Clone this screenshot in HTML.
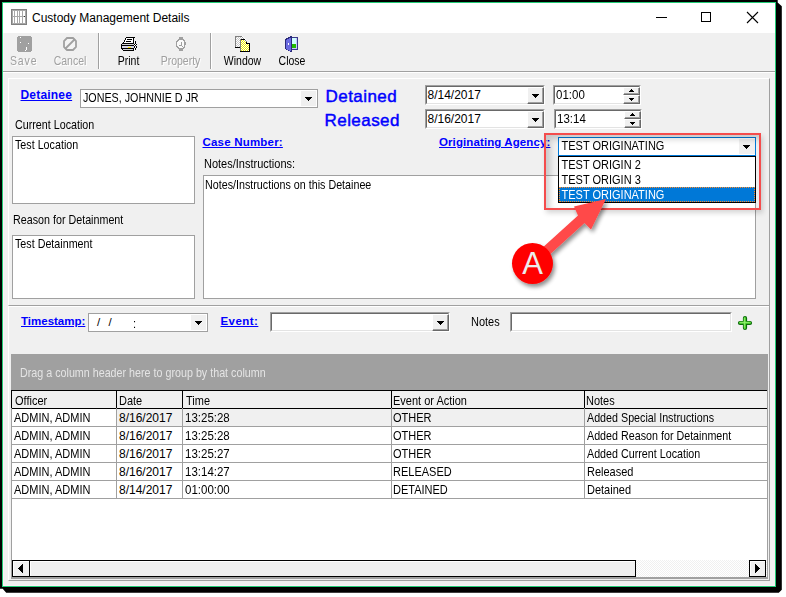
<!DOCTYPE html>
<html><head><meta charset="utf-8">
<style>
*{box-sizing:border-box;margin:0;padding:0}
html,body{width:786px;height:597px;overflow:hidden;background:#fff}
body{position:relative;font-family:"Liberation Sans",sans-serif;font-size:11px;color:#000}
.a{position:absolute}
.t{position:absolute;white-space:pre;line-height:1}
.lnk{color:#0000ff;font-weight:700;text-decoration:underline}
.box{position:absolute;background:#fff;border:1px solid #a0a0a0}
.sunk{position:absolute;background:#fff;border-top:1px solid #a0a0a0;border-left:1px solid #a0a0a0;border-right:1px solid #fff;border-bottom:1px solid #fff}
.sunk>i{position:absolute;left:0;top:0;right:0;bottom:0;border-top:1px solid #696969;border-left:1px solid #696969;border-right:1px solid #e3e3e3;border-bottom:1px solid #e3e3e3}
.btn3d{position:absolute;background:#f0f0f0;border-top:1px solid #fff;border-left:1px solid #fff;border-right:1px solid #696969;border-bottom:1px solid #696969;box-shadow:inset -1px -1px 0 #a0a0a0}
.dn{position:absolute;width:0;height:0;border-left:3.5px solid transparent;border-right:3.5px solid transparent;border-top:4px solid #000}
.up{position:absolute;width:0;height:0;border-left:3px solid transparent;border-right:3px solid transparent;border-bottom:3px solid #000}
.dis{color:#a0a0a0;text-shadow:1px 1px 0 #fff}
</style></head><body>
<!-- shadow -->
<svg class="a" style="left:0;top:0" width="786" height="597">
<polygon fill="#000" points="0,0 777.7,0 777.7,2.5 781.8,6.2 781.8,589.8 778.8,592.8 6.2,592.8 2.7,588.7 0,588.7"/>
</svg>
<!-- window -->
<div class="a" style="left:2px;top:2px;width:774px;height:585px;border:1px solid #22cc77;background:#f0f0f0"></div>
<div class="a" style="left:3px;top:3px;width:772px;height:30px;background:#fff"></div>
<div class="a" style="left:3px;top:33px;width:1px;height:553px;background:#fcf0f6"></div>
<div class="a" style="left:3px;top:585px;width:772px;height:1px;background:#fcf0f6"></div>


<!-- title -->
<svg class="a" style="left:11px;top:9px" width="16" height="16" shape-rendering="crispEdges"><rect x="0" y="0" width="1" height="1" fill="#808080"/><rect x="1" y="0" width="1" height="1" fill="#808080"/><rect x="2" y="0" width="1" height="1" fill="#808080"/><rect x="3" y="0" width="1" height="1" fill="#808080"/><rect x="4" y="0" width="1" height="1" fill="#808080"/><rect x="5" y="0" width="1" height="1" fill="#808080"/><rect x="6" y="0" width="1" height="1" fill="#808080"/><rect x="7" y="0" width="1" height="1" fill="#808080"/><rect x="8" y="0" width="1" height="1" fill="#808080"/><rect x="9" y="0" width="1" height="1" fill="#808080"/><rect x="10" y="0" width="1" height="1" fill="#808080"/><rect x="11" y="0" width="1" height="1" fill="#808080"/><rect x="12" y="0" width="1" height="1" fill="#808080"/><rect x="13" y="0" width="1" height="1" fill="#808080"/><rect x="14" y="0" width="1" height="1" fill="#808080"/><rect x="15" y="0" width="1" height="1" fill="#808080"/><rect x="0" y="1" width="1" height="1" fill="#808080"/><rect x="1" y="1" width="1" height="1" fill="#a8a8a8"/><rect x="2" y="1" width="1" height="1" fill="#a8a8a8"/><rect x="3" y="1" width="1" height="1" fill="#a8a8a8"/><rect x="4" y="1" width="1" height="1" fill="#a8a8a8"/><rect x="5" y="1" width="1" height="1" fill="#a8a8a8"/><rect x="6" y="1" width="1" height="1" fill="#a8a8a8"/><rect x="7" y="1" width="1" height="1" fill="#a8a8a8"/><rect x="8" y="1" width="1" height="1" fill="#a8a8a8"/><rect x="9" y="1" width="1" height="1" fill="#a8a8a8"/><rect x="10" y="1" width="1" height="1" fill="#a8a8a8"/><rect x="11" y="1" width="1" height="1" fill="#a8a8a8"/><rect x="12" y="1" width="1" height="1" fill="#a8a8a8"/><rect x="13" y="1" width="1" height="1" fill="#a8a8a8"/><rect x="14" y="1" width="1" height="1" fill="#a8a8a8"/><rect x="15" y="1" width="1" height="1" fill="#808080"/><rect x="0" y="2" width="1" height="1" fill="#808080"/><rect x="1" y="2" width="1" height="1" fill="#a8a8a8"/><rect x="2" y="2" width="1" height="1" fill="#fff"/><rect x="3" y="2" width="1" height="1" fill="#a8a8a8"/><rect x="4" y="2" width="1" height="1" fill="#fff"/><rect x="5" y="2" width="1" height="1" fill="#fff"/><rect x="6" y="2" width="1" height="1" fill="#a8a8a8"/><rect x="7" y="2" width="1" height="1" fill="#fff"/><rect x="8" y="2" width="1" height="1" fill="#a8a8a8"/><rect x="9" y="2" width="1" height="1" fill="#fff"/><rect x="10" y="2" width="1" height="1" fill="#fff"/><rect x="11" y="2" width="1" height="1" fill="#a8a8a8"/><rect x="12" y="2" width="1" height="1" fill="#fff"/><rect x="13" y="2" width="1" height="1" fill="#fff"/><rect x="14" y="2" width="1" height="1" fill="#a8a8a8"/><rect x="15" y="2" width="1" height="1" fill="#808080"/><rect x="0" y="3" width="1" height="1" fill="#808080"/><rect x="1" y="3" width="1" height="1" fill="#a8a8a8"/><rect x="2" y="3" width="1" height="1" fill="#fff"/><rect x="3" y="3" width="1" height="1" fill="#a8a8a8"/><rect x="4" y="3" width="1" height="1" fill="#fff"/><rect x="5" y="3" width="1" height="1" fill="#fff"/><rect x="6" y="3" width="1" height="1" fill="#a8a8a8"/><rect x="7" y="3" width="1" height="1" fill="#fff"/><rect x="8" y="3" width="1" height="1" fill="#a8a8a8"/><rect x="9" y="3" width="1" height="1" fill="#fff"/><rect x="10" y="3" width="1" height="1" fill="#fff"/><rect x="11" y="3" width="1" height="1" fill="#a8a8a8"/><rect x="12" y="3" width="1" height="1" fill="#fff"/><rect x="13" y="3" width="1" height="1" fill="#fff"/><rect x="14" y="3" width="1" height="1" fill="#a8a8a8"/><rect x="15" y="3" width="1" height="1" fill="#808080"/><rect x="0" y="4" width="1" height="1" fill="#808080"/><rect x="1" y="4" width="1" height="1" fill="#a8a8a8"/><rect x="2" y="4" width="1" height="1" fill="#fff"/><rect x="3" y="4" width="1" height="1" fill="#a8a8a8"/><rect x="4" y="4" width="1" height="1" fill="#fff"/><rect x="5" y="4" width="1" height="1" fill="#fff"/><rect x="6" y="4" width="1" height="1" fill="#a8a8a8"/><rect x="7" y="4" width="1" height="1" fill="#fff"/><rect x="8" y="4" width="1" height="1" fill="#a8a8a8"/><rect x="9" y="4" width="1" height="1" fill="#fff"/><rect x="10" y="4" width="1" height="1" fill="#fff"/><rect x="11" y="4" width="1" height="1" fill="#a8a8a8"/><rect x="12" y="4" width="1" height="1" fill="#fff"/><rect x="13" y="4" width="1" height="1" fill="#fff"/><rect x="14" y="4" width="1" height="1" fill="#a8a8a8"/><rect x="15" y="4" width="1" height="1" fill="#808080"/><rect x="0" y="5" width="1" height="1" fill="#808080"/><rect x="1" y="5" width="1" height="1" fill="#a8a8a8"/><rect x="2" y="5" width="1" height="1" fill="#fff"/><rect x="3" y="5" width="1" height="1" fill="#a8a8a8"/><rect x="4" y="5" width="1" height="1" fill="#fff"/><rect x="5" y="5" width="1" height="1" fill="#fff"/><rect x="6" y="5" width="1" height="1" fill="#a8a8a8"/><rect x="7" y="5" width="1" height="1" fill="#fff"/><rect x="8" y="5" width="1" height="1" fill="#a8a8a8"/><rect x="9" y="5" width="1" height="1" fill="#fff"/><rect x="10" y="5" width="1" height="1" fill="#fff"/><rect x="11" y="5" width="1" height="1" fill="#a8a8a8"/><rect x="12" y="5" width="1" height="1" fill="#fff"/><rect x="13" y="5" width="1" height="1" fill="#fff"/><rect x="14" y="5" width="1" height="1" fill="#a8a8a8"/><rect x="15" y="5" width="1" height="1" fill="#808080"/><rect x="0" y="6" width="1" height="1" fill="#808080"/><rect x="1" y="6" width="1" height="1" fill="#a8a8a8"/><rect x="2" y="6" width="1" height="1" fill="#fff"/><rect x="3" y="6" width="1" height="1" fill="#a8a8a8"/><rect x="4" y="6" width="1" height="1" fill="#fff"/><rect x="5" y="6" width="1" height="1" fill="#fff"/><rect x="6" y="6" width="1" height="1" fill="#a8a8a8"/><rect x="7" y="6" width="1" height="1" fill="#fff"/><rect x="8" y="6" width="1" height="1" fill="#a8a8a8"/><rect x="9" y="6" width="1" height="1" fill="#fff"/><rect x="10" y="6" width="1" height="1" fill="#fff"/><rect x="11" y="6" width="1" height="1" fill="#a8a8a8"/><rect x="12" y="6" width="1" height="1" fill="#fff"/><rect x="13" y="6" width="1" height="1" fill="#fff"/><rect x="14" y="6" width="1" height="1" fill="#a8a8a8"/><rect x="15" y="6" width="1" height="1" fill="#808080"/><rect x="0" y="7" width="1" height="1" fill="#808080"/><rect x="1" y="7" width="1" height="1" fill="#a8a8a8"/><rect x="2" y="7" width="1" height="1" fill="#a8a8a8"/><rect x="3" y="7" width="1" height="1" fill="#a8a8a8"/><rect x="4" y="7" width="1" height="1" fill="#a8a8a8"/><rect x="5" y="7" width="1" height="1" fill="#a8a8a8"/><rect x="6" y="7" width="1" height="1" fill="#a8a8a8"/><rect x="7" y="7" width="1" height="1" fill="#a8a8a8"/><rect x="8" y="7" width="1" height="1" fill="#a8a8a8"/><rect x="9" y="7" width="1" height="1" fill="#a8a8a8"/><rect x="10" y="7" width="1" height="1" fill="#a8a8a8"/><rect x="11" y="7" width="1" height="1" fill="#a8a8a8"/><rect x="12" y="7" width="1" height="1" fill="#a8a8a8"/><rect x="13" y="7" width="1" height="1" fill="#303030"/><rect x="14" y="7" width="1" height="1" fill="#a8a8a8"/><rect x="15" y="7" width="1" height="1" fill="#808080"/><rect x="0" y="8" width="1" height="1" fill="#808080"/><rect x="1" y="8" width="1" height="1" fill="#a8a8a8"/><rect x="2" y="8" width="1" height="1" fill="#fff"/><rect x="3" y="8" width="1" height="1" fill="#a8a8a8"/><rect x="4" y="8" width="1" height="1" fill="#fff"/><rect x="5" y="8" width="1" height="1" fill="#fff"/><rect x="6" y="8" width="1" height="1" fill="#a8a8a8"/><rect x="7" y="8" width="1" height="1" fill="#fff"/><rect x="8" y="8" width="1" height="1" fill="#a8a8a8"/><rect x="9" y="8" width="1" height="1" fill="#fff"/><rect x="10" y="8" width="1" height="1" fill="#fff"/><rect x="11" y="8" width="1" height="1" fill="#a8a8a8"/><rect x="12" y="8" width="1" height="1" fill="#fff"/><rect x="13" y="8" width="1" height="1" fill="#fff"/><rect x="14" y="8" width="1" height="1" fill="#a8a8a8"/><rect x="15" y="8" width="1" height="1" fill="#808080"/><rect x="0" y="9" width="1" height="1" fill="#808080"/><rect x="1" y="9" width="1" height="1" fill="#a8a8a8"/><rect x="2" y="9" width="1" height="1" fill="#fff"/><rect x="3" y="9" width="1" height="1" fill="#a8a8a8"/><rect x="4" y="9" width="1" height="1" fill="#fff"/><rect x="5" y="9" width="1" height="1" fill="#fff"/><rect x="6" y="9" width="1" height="1" fill="#a8a8a8"/><rect x="7" y="9" width="1" height="1" fill="#fff"/><rect x="8" y="9" width="1" height="1" fill="#a8a8a8"/><rect x="9" y="9" width="1" height="1" fill="#fff"/><rect x="10" y="9" width="1" height="1" fill="#fff"/><rect x="11" y="9" width="1" height="1" fill="#a8a8a8"/><rect x="12" y="9" width="1" height="1" fill="#fff"/><rect x="13" y="9" width="1" height="1" fill="#fff"/><rect x="14" y="9" width="1" height="1" fill="#a8a8a8"/><rect x="15" y="9" width="1" height="1" fill="#808080"/><rect x="0" y="10" width="1" height="1" fill="#808080"/><rect x="1" y="10" width="1" height="1" fill="#a8a8a8"/><rect x="2" y="10" width="1" height="1" fill="#fff"/><rect x="3" y="10" width="1" height="1" fill="#a8a8a8"/><rect x="4" y="10" width="1" height="1" fill="#fff"/><rect x="5" y="10" width="1" height="1" fill="#fff"/><rect x="6" y="10" width="1" height="1" fill="#a8a8a8"/><rect x="7" y="10" width="1" height="1" fill="#fff"/><rect x="8" y="10" width="1" height="1" fill="#a8a8a8"/><rect x="9" y="10" width="1" height="1" fill="#fff"/><rect x="10" y="10" width="1" height="1" fill="#fff"/><rect x="11" y="10" width="1" height="1" fill="#a8a8a8"/><rect x="12" y="10" width="1" height="1" fill="#fff"/><rect x="13" y="10" width="1" height="1" fill="#fff"/><rect x="14" y="10" width="1" height="1" fill="#a8a8a8"/><rect x="15" y="10" width="1" height="1" fill="#808080"/><rect x="0" y="11" width="1" height="1" fill="#808080"/><rect x="1" y="11" width="1" height="1" fill="#a8a8a8"/><rect x="2" y="11" width="1" height="1" fill="#fff"/><rect x="3" y="11" width="1" height="1" fill="#a8a8a8"/><rect x="4" y="11" width="1" height="1" fill="#fff"/><rect x="5" y="11" width="1" height="1" fill="#fff"/><rect x="6" y="11" width="1" height="1" fill="#a8a8a8"/><rect x="7" y="11" width="1" height="1" fill="#fff"/><rect x="8" y="11" width="1" height="1" fill="#a8a8a8"/><rect x="9" y="11" width="1" height="1" fill="#fff"/><rect x="10" y="11" width="1" height="1" fill="#fff"/><rect x="11" y="11" width="1" height="1" fill="#a8a8a8"/><rect x="12" y="11" width="1" height="1" fill="#fff"/><rect x="13" y="11" width="1" height="1" fill="#fff"/><rect x="14" y="11" width="1" height="1" fill="#a8a8a8"/><rect x="15" y="11" width="1" height="1" fill="#808080"/><rect x="0" y="12" width="1" height="1" fill="#808080"/><rect x="1" y="12" width="1" height="1" fill="#a8a8a8"/><rect x="2" y="12" width="1" height="1" fill="#fff"/><rect x="3" y="12" width="1" height="1" fill="#a8a8a8"/><rect x="4" y="12" width="1" height="1" fill="#fff"/><rect x="5" y="12" width="1" height="1" fill="#fff"/><rect x="6" y="12" width="1" height="1" fill="#a8a8a8"/><rect x="7" y="12" width="1" height="1" fill="#fff"/><rect x="8" y="12" width="1" height="1" fill="#a8a8a8"/><rect x="9" y="12" width="1" height="1" fill="#fff"/><rect x="10" y="12" width="1" height="1" fill="#fff"/><rect x="11" y="12" width="1" height="1" fill="#a8a8a8"/><rect x="12" y="12" width="1" height="1" fill="#fff"/><rect x="13" y="12" width="1" height="1" fill="#fff"/><rect x="14" y="12" width="1" height="1" fill="#a8a8a8"/><rect x="15" y="12" width="1" height="1" fill="#808080"/><rect x="0" y="13" width="1" height="1" fill="#808080"/><rect x="1" y="13" width="1" height="1" fill="#a8a8a8"/><rect x="2" y="13" width="1" height="1" fill="#fff"/><rect x="3" y="13" width="1" height="1" fill="#a8a8a8"/><rect x="4" y="13" width="1" height="1" fill="#fff"/><rect x="5" y="13" width="1" height="1" fill="#fff"/><rect x="6" y="13" width="1" height="1" fill="#a8a8a8"/><rect x="7" y="13" width="1" height="1" fill="#fff"/><rect x="8" y="13" width="1" height="1" fill="#a8a8a8"/><rect x="9" y="13" width="1" height="1" fill="#fff"/><rect x="10" y="13" width="1" height="1" fill="#fff"/><rect x="11" y="13" width="1" height="1" fill="#a8a8a8"/><rect x="12" y="13" width="1" height="1" fill="#fff"/><rect x="13" y="13" width="1" height="1" fill="#fff"/><rect x="14" y="13" width="1" height="1" fill="#a8a8a8"/><rect x="15" y="13" width="1" height="1" fill="#808080"/><rect x="0" y="14" width="1" height="1" fill="#808080"/><rect x="1" y="14" width="1" height="1" fill="#a8a8a8"/><rect x="2" y="14" width="1" height="1" fill="#a8a8a8"/><rect x="3" y="14" width="1" height="1" fill="#a8a8a8"/><rect x="4" y="14" width="1" height="1" fill="#a8a8a8"/><rect x="5" y="14" width="1" height="1" fill="#a8a8a8"/><rect x="6" y="14" width="1" height="1" fill="#a8a8a8"/><rect x="7" y="14" width="1" height="1" fill="#a8a8a8"/><rect x="8" y="14" width="1" height="1" fill="#a8a8a8"/><rect x="9" y="14" width="1" height="1" fill="#a8a8a8"/><rect x="10" y="14" width="1" height="1" fill="#a8a8a8"/><rect x="11" y="14" width="1" height="1" fill="#a8a8a8"/><rect x="12" y="14" width="1" height="1" fill="#a8a8a8"/><rect x="13" y="14" width="1" height="1" fill="#a8a8a8"/><rect x="14" y="14" width="1" height="1" fill="#a8a8a8"/><rect x="15" y="14" width="1" height="1" fill="#808080"/><rect x="0" y="15" width="1" height="1" fill="#808080"/><rect x="1" y="15" width="1" height="1" fill="#808080"/><rect x="2" y="15" width="1" height="1" fill="#808080"/><rect x="3" y="15" width="1" height="1" fill="#808080"/><rect x="4" y="15" width="1" height="1" fill="#808080"/><rect x="5" y="15" width="1" height="1" fill="#808080"/><rect x="6" y="15" width="1" height="1" fill="#808080"/><rect x="7" y="15" width="1" height="1" fill="#808080"/><rect x="8" y="15" width="1" height="1" fill="#808080"/><rect x="9" y="15" width="1" height="1" fill="#808080"/><rect x="10" y="15" width="1" height="1" fill="#808080"/><rect x="11" y="15" width="1" height="1" fill="#808080"/><rect x="12" y="15" width="1" height="1" fill="#808080"/><rect x="13" y="15" width="1" height="1" fill="#808080"/><rect x="14" y="15" width="1" height="1" fill="#808080"/><rect x="15" y="15" width="1" height="1" fill="#808080"/></svg>
<div class="t" style="left:32px;top:11.5px;font-size:12px;color:#000">Custody Management Details</div>
<div class="a" style="left:656px;top:17px;width:11px;height:1px;background:#000"></div>
<div class="a" style="left:701px;top:12px;width:10px;height:10px;border:1px solid #000"></div>
<svg class="a" style="left:746px;top:11px" width="13" height="13"><path d="M1 1L12 12M12 1L1 12" stroke="#000" stroke-width="1.1"/></svg>

<!-- toolbar -->
<div class="a" style="left:3px;top:71px;width:772px;height:1px;background:#a0a0a0"></div>
<div class="a" style="left:3px;top:72px;width:772px;height:1px;background:#fff"></div>
<div class="a" style="left:98px;top:33px;width:1px;height:36px;background:#a0a0a0"></div><div class="a" style="left:99px;top:33px;width:1px;height:36px;background:#fff"></div>
<div class="a" style="left:210px;top:33px;width:1px;height:36px;background:#a0a0a0"></div><div class="a" style="left:211px;top:33px;width:1px;height:36px;background:#fff"></div>

<svg class="a" style="left:17px;top:36px" width="16" height="16" shape-rendering="crispEdges">
<path d="M1 0H14V1H15V15H14V16H1V15H0V1H1Z" fill="#a0a0a0"/>
<rect x="3" y="1" width="1" height="1" fill="#fff"/>
<rect x="3" y="6" width="1" height="1" fill="#fff"/>
<rect x="11" y="7" width="1" height="1" fill="#fff"/>
<rect x="9" y="11" width="1" height="3" fill="#fff"/>
<rect x="8" y="14" width="1" height="1" fill="#fff"/>
</svg>
<div class="t dis" style="left:0;width:47.5px;text-align:center;top:54px;font-size:10.5px;letter-spacing:0.9px;transform:scaleY(1.17);transform-origin:50% 0">Save</div>

<svg class="a" style="left:62px;top:36px" width="16" height="16">
<polygon points="5,2 11,2 14,5 14,11 11,14 5,14 2,11 2,5" fill="#f4f4f4" stroke="#a0a0a0" stroke-width="1.8"/>
<path d="M13 3L3 13" stroke="#a0a0a0" stroke-width="1.8"/>
</svg>
<div class="t dis" style="left:40px;width:60px;text-align:center;top:54px;font-size:10.5px;transform:scaleY(1.17);transform-origin:50% 0">Cancel</div>

<svg class="a" style="left:120px;top:36px" width="17" height="16" shape-rendering="crispEdges"><rect x="6" y="1" width="1" height="1" fill="#000"/><rect x="7" y="1" width="1" height="1" fill="#000"/><rect x="8" y="1" width="1" height="1" fill="#000"/><rect x="9" y="1" width="1" height="1" fill="#000"/><rect x="10" y="1" width="1" height="1" fill="#000"/><rect x="11" y="1" width="1" height="1" fill="#000"/><rect x="12" y="1" width="1" height="1" fill="#000"/><rect x="13" y="1" width="1" height="1" fill="#000"/><rect x="14" y="1" width="1" height="1" fill="#000"/><rect x="5" y="2" width="1" height="1" fill="#000"/><rect x="6" y="2" width="1" height="1" fill="#fff"/><rect x="7" y="2" width="1" height="1" fill="#fff"/><rect x="8" y="2" width="1" height="1" fill="#fff"/><rect x="9" y="2" width="1" height="1" fill="#fff"/><rect x="10" y="2" width="1" height="1" fill="#fff"/><rect x="11" y="2" width="1" height="1" fill="#fff"/><rect x="12" y="2" width="1" height="1" fill="#fff"/><rect x="13" y="2" width="1" height="1" fill="#000"/><rect x="5" y="3" width="1" height="1" fill="#000"/><rect x="6" y="3" width="1" height="1" fill="#fff"/><rect x="7" y="3" width="1" height="1" fill="#000"/><rect x="8" y="3" width="1" height="1" fill="#000"/><rect x="9" y="3" width="1" height="1" fill="#000"/><rect x="10" y="3" width="1" height="1" fill="#000"/><rect x="11" y="3" width="1" height="1" fill="#000"/><rect x="12" y="3" width="1" height="1" fill="#fff"/><rect x="13" y="3" width="1" height="1" fill="#000"/><rect x="4" y="4" width="1" height="1" fill="#000"/><rect x="5" y="4" width="1" height="1" fill="#fff"/><rect x="6" y="4" width="1" height="1" fill="#fff"/><rect x="7" y="4" width="1" height="1" fill="#fff"/><rect x="8" y="4" width="1" height="1" fill="#fff"/><rect x="9" y="4" width="1" height="1" fill="#fff"/><rect x="10" y="4" width="1" height="1" fill="#fff"/><rect x="11" y="4" width="1" height="1" fill="#fff"/><rect x="12" y="4" width="1" height="1" fill="#fff"/><rect x="13" y="4" width="1" height="1" fill="#000"/><rect x="4" y="5" width="1" height="1" fill="#000"/><rect x="5" y="5" width="1" height="1" fill="#fff"/><rect x="6" y="5" width="1" height="1" fill="#000"/><rect x="7" y="5" width="1" height="1" fill="#000"/><rect x="8" y="5" width="1" height="1" fill="#000"/><rect x="9" y="5" width="1" height="1" fill="#000"/><rect x="10" y="5" width="1" height="1" fill="#000"/><rect x="11" y="5" width="1" height="1" fill="#fff"/><rect x="12" y="5" width="1" height="1" fill="#fff"/><rect x="13" y="5" width="1" height="1" fill="#000"/><rect x="14" y="5" width="1" height="1" fill="#fff"/><rect x="15" y="5" width="1" height="1" fill="#000"/><rect x="3" y="6" width="1" height="1" fill="#000"/><rect x="4" y="6" width="1" height="1" fill="#fff"/><rect x="5" y="6" width="1" height="1" fill="#fff"/><rect x="6" y="6" width="1" height="1" fill="#fff"/><rect x="7" y="6" width="1" height="1" fill="#fff"/><rect x="8" y="6" width="1" height="1" fill="#fff"/><rect x="9" y="6" width="1" height="1" fill="#fff"/><rect x="10" y="6" width="1" height="1" fill="#fff"/><rect x="11" y="6" width="1" height="1" fill="#fff"/><rect x="12" y="6" width="1" height="1" fill="#fff"/><rect x="13" y="6" width="1" height="1" fill="#000"/><rect x="14" y="6" width="1" height="1" fill="#fff"/><rect x="15" y="6" width="1" height="1" fill="#000"/><rect x="2" y="7" width="1" height="1" fill="#000"/><rect x="3" y="7" width="1" height="1" fill="#000"/><rect x="4" y="7" width="1" height="1" fill="#000"/><rect x="5" y="7" width="1" height="1" fill="#000"/><rect x="6" y="7" width="1" height="1" fill="#000"/><rect x="7" y="7" width="1" height="1" fill="#000"/><rect x="8" y="7" width="1" height="1" fill="#000"/><rect x="9" y="7" width="1" height="1" fill="#000"/><rect x="10" y="7" width="1" height="1" fill="#000"/><rect x="11" y="7" width="1" height="1" fill="#000"/><rect x="12" y="7" width="1" height="1" fill="#000"/><rect x="13" y="7" width="1" height="1" fill="#000"/><rect x="15" y="7" width="1" height="1" fill="#000"/><rect x="1" y="8" width="1" height="1" fill="#000"/><rect x="2" y="8" width="1" height="1" fill="#d4d4d4"/><rect x="3" y="8" width="1" height="1" fill="#d4d4d4"/><rect x="4" y="8" width="1" height="1" fill="#d4d4d4"/><rect x="5" y="8" width="1" height="1" fill="#d4d4d4"/><rect x="6" y="8" width="1" height="1" fill="#d4d4d4"/><rect x="7" y="8" width="1" height="1" fill="#d4d4d4"/><rect x="8" y="8" width="1" height="1" fill="#d4d4d4"/><rect x="9" y="8" width="1" height="1" fill="#d4d4d4"/><rect x="10" y="8" width="1" height="1" fill="#d4d4d4"/><rect x="11" y="8" width="1" height="1" fill="#d4d4d4"/><rect x="12" y="8" width="1" height="1" fill="#d4d4d4"/><rect x="13" y="8" width="1" height="1" fill="#d4d4d4"/><rect x="14" y="8" width="1" height="1" fill="#000"/><rect x="15" y="8" width="1" height="1" fill="#fff"/><rect x="16" y="8" width="1" height="1" fill="#000"/><rect x="1" y="9" width="1" height="1" fill="#000"/><rect x="2" y="9" width="1" height="1" fill="#000"/><rect x="3" y="9" width="1" height="1" fill="#000"/><rect x="4" y="9" width="1" height="1" fill="#000"/><rect x="5" y="9" width="1" height="1" fill="#000"/><rect x="6" y="9" width="1" height="1" fill="#000"/><rect x="7" y="9" width="1" height="1" fill="#000"/><rect x="8" y="9" width="1" height="1" fill="#000"/><rect x="9" y="9" width="1" height="1" fill="#000"/><rect x="10" y="9" width="1" height="1" fill="#000"/><rect x="11" y="9" width="1" height="1" fill="#000"/><rect x="12" y="9" width="1" height="1" fill="#000"/><rect x="13" y="9" width="1" height="1" fill="#000"/><rect x="14" y="9" width="1" height="1" fill="#fff"/><rect x="15" y="9" width="1" height="1" fill="#000"/><rect x="1" y="10" width="1" height="1" fill="#000"/><rect x="2" y="10" width="1" height="1" fill="#d8d8e8"/><rect x="3" y="10" width="1" height="1" fill="#d8d8e8"/><rect x="4" y="10" width="1" height="1" fill="#d8d8e8"/><rect x="5" y="10" width="1" height="1" fill="#d8d8e8"/><rect x="6" y="10" width="1" height="1" fill="#d8d8e8"/><rect x="7" y="10" width="1" height="1" fill="#d8d8e8"/><rect x="8" y="10" width="1" height="1" fill="#d8d8e8"/><rect x="9" y="10" width="1" height="1" fill="#d8d8e8"/><rect x="10" y="10" width="1" height="1" fill="#d8d8e8"/><rect x="11" y="10" width="1" height="1" fill="#d8d8e8"/><rect x="12" y="10" width="1" height="1" fill="#d8d8e8"/><rect x="13" y="10" width="1" height="1" fill="#d8d8e8"/><rect x="14" y="10" width="1" height="1" fill="#000"/><rect x="16" y="10" width="1" height="1" fill="#000"/><rect x="1" y="11" width="1" height="1" fill="#000"/><rect x="2" y="11" width="1" height="1" fill="#d8d8e8"/><rect x="3" y="11" width="1" height="1" fill="#d8d8e8"/><rect x="4" y="11" width="1" height="1" fill="#d8d8e8"/><rect x="5" y="11" width="1" height="1" fill="#d8d8e8"/><rect x="6" y="11" width="1" height="1" fill="#d8d8e8"/><rect x="7" y="11" width="1" height="1" fill="#d8d8e8"/><rect x="8" y="11" width="1" height="1" fill="#ffee00"/><rect x="9" y="11" width="1" height="1" fill="#ffee00"/><rect x="10" y="11" width="1" height="1" fill="#ffee00"/><rect x="11" y="11" width="1" height="1" fill="#d8d8e8"/><rect x="12" y="11" width="1" height="1" fill="#d8d8e8"/><rect x="13" y="11" width="1" height="1" fill="#d8d8e8"/><rect x="14" y="11" width="1" height="1" fill="#000"/><rect x="15" y="11" width="1" height="1" fill="#fff"/><rect x="16" y="11" width="1" height="1" fill="#000"/><rect x="1" y="12" width="1" height="1" fill="#000"/><rect x="2" y="12" width="1" height="1" fill="#000"/><rect x="3" y="12" width="1" height="1" fill="#000"/><rect x="4" y="12" width="1" height="1" fill="#000"/><rect x="5" y="12" width="1" height="1" fill="#000"/><rect x="6" y="12" width="1" height="1" fill="#000"/><rect x="7" y="12" width="1" height="1" fill="#000"/><rect x="8" y="12" width="1" height="1" fill="#000"/><rect x="9" y="12" width="1" height="1" fill="#000"/><rect x="10" y="12" width="1" height="1" fill="#000"/><rect x="11" y="12" width="1" height="1" fill="#000"/><rect x="12" y="12" width="1" height="1" fill="#000"/><rect x="13" y="12" width="1" height="1" fill="#000"/><rect x="15" y="12" width="1" height="1" fill="#000"/><rect x="2" y="13" width="1" height="1" fill="#000"/><rect x="3" y="13" width="1" height="1" fill="#d4d4d4"/><rect x="4" y="13" width="1" height="1" fill="#d4d4d4"/><rect x="5" y="13" width="1" height="1" fill="#d4d4d4"/><rect x="6" y="13" width="1" height="1" fill="#d4d4d4"/><rect x="7" y="13" width="1" height="1" fill="#d4d4d4"/><rect x="8" y="13" width="1" height="1" fill="#d4d4d4"/><rect x="9" y="13" width="1" height="1" fill="#d4d4d4"/><rect x="10" y="13" width="1" height="1" fill="#d4d4d4"/><rect x="11" y="13" width="1" height="1" fill="#d4d4d4"/><rect x="12" y="13" width="1" height="1" fill="#d4d4d4"/><rect x="13" y="13" width="1" height="1" fill="#000"/><rect x="14" y="13" width="1" height="1" fill="#fff"/><rect x="15" y="13" width="1" height="1" fill="#000"/><rect x="3" y="14" width="1" height="1" fill="#000"/><rect x="4" y="14" width="1" height="1" fill="#000"/><rect x="5" y="14" width="1" height="1" fill="#000"/><rect x="6" y="14" width="1" height="1" fill="#000"/><rect x="7" y="14" width="1" height="1" fill="#000"/><rect x="8" y="14" width="1" height="1" fill="#000"/><rect x="9" y="14" width="1" height="1" fill="#000"/><rect x="10" y="14" width="1" height="1" fill="#000"/><rect x="11" y="14" width="1" height="1" fill="#000"/><rect x="12" y="14" width="1" height="1" fill="#000"/><rect x="13" y="14" width="1" height="1" fill="#000"/></svg>
<div class="t" style="left:98.5px;width:60px;text-align:center;top:54px;font-size:10.5px;transform:scaleY(1.17);transform-origin:50% 0">Print</div>

<svg class="a" style="left:175px;top:36px" width="12" height="16" shape-rendering="crispEdges"><rect x="4" y="1" width="1" height="1" fill="#a0a0a0"/><rect x="5" y="1" width="1" height="1" fill="#a0a0a0"/><rect x="6" y="1" width="1" height="1" fill="#a0a0a0"/><rect x="7" y="1" width="1" height="1" fill="#a0a0a0"/><rect x="4" y="2" width="1" height="1" fill="#a0a0a0"/><rect x="5" y="2" width="1" height="1" fill="#a0a0a0"/><rect x="6" y="2" width="1" height="1" fill="#a0a0a0"/><rect x="7" y="2" width="1" height="1" fill="#a0a0a0"/><rect x="3" y="3" width="1" height="1" fill="#a0a0a0"/><rect x="4" y="3" width="1" height="1" fill="#a0a0a0"/><rect x="5" y="3" width="1" height="1" fill="#a0a0a0"/><rect x="6" y="3" width="1" height="1" fill="#a0a0a0"/><rect x="7" y="3" width="1" height="1" fill="#a0a0a0"/><rect x="8" y="3" width="1" height="1" fill="#a0a0a0"/><rect x="2" y="4" width="1" height="1" fill="#a0a0a0"/><rect x="3" y="4" width="1" height="1" fill="#a0a0a0"/><rect x="4" y="4" width="1" height="1" fill="#fafafa"/><rect x="5" y="4" width="1" height="1" fill="#fafafa"/><rect x="6" y="4" width="1" height="1" fill="#fafafa"/><rect x="7" y="4" width="1" height="1" fill="#fafafa"/><rect x="8" y="4" width="1" height="1" fill="#a0a0a0"/><rect x="9" y="4" width="1" height="1" fill="#a0a0a0"/><rect x="1" y="5" width="1" height="1" fill="#a0a0a0"/><rect x="2" y="5" width="1" height="1" fill="#a0a0a0"/><rect x="3" y="5" width="1" height="1" fill="#fafafa"/><rect x="4" y="5" width="1" height="1" fill="#fafafa"/><rect x="5" y="5" width="1" height="1" fill="#fafafa"/><rect x="6" y="5" width="1" height="1" fill="#fafafa"/><rect x="7" y="5" width="1" height="1" fill="#fafafa"/><rect x="8" y="5" width="1" height="1" fill="#fafafa"/><rect x="9" y="5" width="1" height="1" fill="#a0a0a0"/><rect x="1" y="6" width="1" height="1" fill="#a0a0a0"/><rect x="2" y="6" width="1" height="1" fill="#fafafa"/><rect x="3" y="6" width="1" height="1" fill="#fafafa"/><rect x="4" y="6" width="1" height="1" fill="#fafafa"/><rect x="5" y="6" width="1" height="1" fill="#fafafa"/><rect x="6" y="6" width="1" height="1" fill="#a0a0a0"/><rect x="7" y="6" width="1" height="1" fill="#fafafa"/><rect x="8" y="6" width="1" height="1" fill="#fafafa"/><rect x="9" y="6" width="1" height="1" fill="#a0a0a0"/><rect x="10" y="6" width="1" height="1" fill="#a0a0a0"/><rect x="1" y="7" width="1" height="1" fill="#a0a0a0"/><rect x="2" y="7" width="1" height="1" fill="#fafafa"/><rect x="3" y="7" width="1" height="1" fill="#fafafa"/><rect x="4" y="7" width="1" height="1" fill="#fafafa"/><rect x="5" y="7" width="1" height="1" fill="#fafafa"/><rect x="6" y="7" width="1" height="1" fill="#a0a0a0"/><rect x="7" y="7" width="1" height="1" fill="#fafafa"/><rect x="8" y="7" width="1" height="1" fill="#fafafa"/><rect x="9" y="7" width="1" height="1" fill="#a0a0a0"/><rect x="10" y="7" width="1" height="1" fill="#a0a0a0"/><rect x="1" y="8" width="1" height="1" fill="#a0a0a0"/><rect x="2" y="8" width="1" height="1" fill="#fafafa"/><rect x="3" y="8" width="1" height="1" fill="#fafafa"/><rect x="4" y="8" width="1" height="1" fill="#fafafa"/><rect x="5" y="8" width="1" height="1" fill="#fafafa"/><rect x="6" y="8" width="1" height="1" fill="#a0a0a0"/><rect x="7" y="8" width="1" height="1" fill="#fafafa"/><rect x="8" y="8" width="1" height="1" fill="#fafafa"/><rect x="9" y="8" width="1" height="1" fill="#a0a0a0"/><rect x="10" y="8" width="1" height="1" fill="#a0a0a0"/><rect x="1" y="9" width="1" height="1" fill="#a0a0a0"/><rect x="2" y="9" width="1" height="1" fill="#fafafa"/><rect x="3" y="9" width="1" height="1" fill="#fafafa"/><rect x="4" y="9" width="1" height="1" fill="#a0a0a0"/><rect x="5" y="9" width="1" height="1" fill="#a0a0a0"/><rect x="6" y="9" width="1" height="1" fill="#a0a0a0"/><rect x="7" y="9" width="1" height="1" fill="#fafafa"/><rect x="8" y="9" width="1" height="1" fill="#fafafa"/><rect x="9" y="9" width="1" height="1" fill="#a0a0a0"/><rect x="1" y="10" width="1" height="1" fill="#a0a0a0"/><rect x="2" y="10" width="1" height="1" fill="#a0a0a0"/><rect x="3" y="10" width="1" height="1" fill="#fafafa"/><rect x="4" y="10" width="1" height="1" fill="#fafafa"/><rect x="5" y="10" width="1" height="1" fill="#fafafa"/><rect x="6" y="10" width="1" height="1" fill="#fafafa"/><rect x="7" y="10" width="1" height="1" fill="#a0a0a0"/><rect x="8" y="10" width="1" height="1" fill="#fafafa"/><rect x="9" y="10" width="1" height="1" fill="#a0a0a0"/><rect x="2" y="11" width="1" height="1" fill="#a0a0a0"/><rect x="3" y="11" width="1" height="1" fill="#a0a0a0"/><rect x="4" y="11" width="1" height="1" fill="#fafafa"/><rect x="5" y="11" width="1" height="1" fill="#fafafa"/><rect x="6" y="11" width="1" height="1" fill="#fafafa"/><rect x="7" y="11" width="1" height="1" fill="#fafafa"/><rect x="8" y="11" width="1" height="1" fill="#a0a0a0"/><rect x="9" y="11" width="1" height="1" fill="#a0a0a0"/><rect x="3" y="12" width="1" height="1" fill="#a0a0a0"/><rect x="4" y="12" width="1" height="1" fill="#a0a0a0"/><rect x="5" y="12" width="1" height="1" fill="#a0a0a0"/><rect x="6" y="12" width="1" height="1" fill="#a0a0a0"/><rect x="7" y="12" width="1" height="1" fill="#a0a0a0"/><rect x="8" y="12" width="1" height="1" fill="#a0a0a0"/><rect x="4" y="13" width="1" height="1" fill="#a0a0a0"/><rect x="5" y="13" width="1" height="1" fill="#a0a0a0"/><rect x="6" y="13" width="1" height="1" fill="#a0a0a0"/><rect x="7" y="13" width="1" height="1" fill="#a0a0a0"/><rect x="4" y="14" width="1" height="1" fill="#a0a0a0"/><rect x="5" y="14" width="1" height="1" fill="#a0a0a0"/><rect x="6" y="14" width="1" height="1" fill="#a0a0a0"/><rect x="7" y="14" width="1" height="1" fill="#a0a0a0"/></svg>
<div class="t dis" style="left:150.5px;width:60px;text-align:center;top:54px;font-size:10.5px;transform:scaleY(1.17);transform-origin:50% 0">Property</div>

<svg class="a" style="left:235px;top:36px" width="16" height="16" shape-rendering="crispEdges">
<defs>
<pattern id="pg" width="2" height="2" patternUnits="userSpaceOnUse"><rect width="2" height="2" fill="#fff"/><rect width="1" height="1" fill="#c8c8c8"/><rect x="1" y="1" width="1" height="1" fill="#c8c8c8"/></pattern>
<pattern id="py" width="2" height="2" patternUnits="userSpaceOnUse"><rect width="2" height="2" fill="#fff"/><rect width="1" height="1" fill="#f0f000"/><rect x="1" y="1" width="1" height="1" fill="#f0f000"/></pattern>
</defs>
<path d="M0 0H7L11 4V12H0Z" fill="url(#pg)"/>
<rect x="0" y="0" width="7" height="1" fill="#808080"/>
<rect x="0" y="0" width="1" height="12" fill="#808080"/>
<rect x="7" y="1" width="1" height="1" fill="#a0a0a0"/>
<rect x="8" y="2" width="1" height="1" fill="#a0a0a0"/>
<rect x="0" y="11" width="5" height="1" fill="#000"/>
<path d="M5 3H10L14 7V15H5Z" fill="url(#py)"/>
<rect x="5" y="3" width="5" height="1" fill="#000"/>
<rect x="5" y="3" width="1" height="13" fill="#808080"/>
<rect x="10" y="4" width="1" height="1" fill="#808080"/>
<rect x="11" y="5" width="1" height="1" fill="#808080"/>
<rect x="11" y="7" width="4" height="1" fill="#000"/>
<rect x="11" y="6" width="1" height="1" fill="#000"/>
<rect x="14" y="7" width="1" height="9" fill="#000"/>
<rect x="5" y="15" width="10" height="1" fill="#000"/>
<rect x="12" y="4" width="3" height="3" fill="#f0f0f0"/>
</svg>
<div class="t" style="left:212.5px;width:60px;text-align:center;top:54px;font-size:10.5px;transform:scaleY(1.17);transform-origin:50% 0">Window</div>

<svg class="a" style="left:284px;top:36px" width="15" height="16" shape-rendering="crispEdges">
<rect x="7" y="1" width="7" height="13" fill="#3a3a8a"/>
<rect x="8" y="2" width="5" height="11" fill="#c8c8ff"/>
<rect x="8" y="2" width="4" height="6" fill="#d0ffff"/>
<rect x="8" y="8" width="4" height="4" fill="#22bb00"/>
<path d="M1 3H2V2H4V1H6V0H8V16H6V15H4V14H2V13H1Z" fill="#2a2a7a"/>
<path d="M2 4H3V3H5V2H7V15H5V14H3V13H2Z" fill="#6a6ae0"/>
<rect x="4" y="7" width="1" height="2" fill="#fff"/>
</svg>
<div class="t" style="left:262px;width:60px;text-align:center;top:54px;font-size:10.5px;transform:scaleY(1.17);transform-origin:50% 0">Close</div>


<!-- panel 1 -->
<div class="a" style="left:8px;top:78px;width:762px;height:228px;border-top:1px solid #fff;border-left:1px solid #fff;border-bottom:1px solid #a0a0a0;border-right:1px solid #a0a0a0"></div>
<div class="t lnk" style="left:20.5px;top:88.5px;font-size:12px;letter-spacing:0.2px">Detainee</div>
<div class="box" style="left:80px;top:89px;width:238px;height:19px"></div>
<div class="a" style="left:301px;top:91px;width:15px;height:15px;background:#f0f0f0"></div>
<svg class="a" style="left:305px;top:97px" width="7" height="4" shape-rendering="crispEdges"><path d="M0 0h7v1h-1v1h-1v1h-1v1h-1v-1h-1v-1h-1v-1h-1z"/></svg>
<div class="t" style="left:82.5px;top:91.5px;font-size:11px;transform:scale(0.975,1.12);transform-origin:0 0">JONES, JOHNNIE D JR</div>
<div class="t" style="left:325.5px;top:87.5px;font-size:17px;font-weight:400;letter-spacing:0.45px;-webkit-text-stroke:0.45px #0000ff;color:#0000ff">Detained</div>
<div class="t" style="left:324.5px;top:111.5px;font-size:17px;font-weight:400;letter-spacing:0.45px;-webkit-text-stroke:0.45px #0000ff;color:#0000ff">Released</div>

<div class="sunk" style="left:425px;top:85px;width:120px;height:20px"><i></i></div>
<div class="btn3d" style="left:527px;top:87px;width:17px;height:17px"></div>
<svg class="a" style="left:532px;top:94px" width="7" height="4" shape-rendering="crispEdges"><path d="M0 0h7v1h-1v1h-1v1h-1v1h-1v-1h-1v-1h-1v-1h-1z"/></svg>
<div class="t" style="left:427.5px;top:88.5px;font-size:12px">8/14/2017</div>
<div class="sunk" style="left:425px;top:109px;width:120px;height:20px"><i></i></div>
<div class="btn3d" style="left:527px;top:111px;width:17px;height:17px"></div>
<svg class="a" style="left:532px;top:118px" width="7" height="4" shape-rendering="crispEdges"><path d="M0 0h7v1h-1v1h-1v1h-1v1h-1v-1h-1v-1h-1v-1h-1z"/></svg>
<div class="t" style="left:427.5px;top:112.5px;font-size:12px">8/16/2017</div>

<div class="sunk" style="left:553px;top:85px;width:88px;height:20px"><i></i></div>
<div class="btn3d" style="left:623px;top:87px;width:17px;height:8px"></div>
<div class="btn3d" style="left:623px;top:95px;width:17px;height:9px"></div>
<svg class="a" style="left:629px;top:89px" width="5" height="3" shape-rendering="crispEdges"><path d="M0 3h5v-1h-1v-1h-1v-1h-1v1h-1v1h-1z"/></svg>
<svg class="a" style="left:629px;top:98px" width="5" height="3" shape-rendering="crispEdges"><path d="M0 0h5v1h-1v1h-1v1h-1v-1h-1v-1h-1z"/></svg>
<div class="t" style="left:556px;top:88.5px;font-size:11.5px;transform:scaleY(1.1);transform-origin:0 0">01:00</div>
<div class="sunk" style="left:554px;top:109px;width:88px;height:20px"><i></i></div>
<div class="btn3d" style="left:624px;top:111px;width:17px;height:8px"></div>
<div class="btn3d" style="left:624px;top:119px;width:17px;height:9px"></div>
<svg class="a" style="left:630px;top:113px" width="5" height="3" shape-rendering="crispEdges"><path d="M0 3h5v-1h-1v-1h-1v-1h-1v1h-1v1h-1z"/></svg>
<svg class="a" style="left:630px;top:122px" width="5" height="3" shape-rendering="crispEdges"><path d="M0 0h5v1h-1v1h-1v1h-1v-1h-1v-1h-1z"/></svg>
<div class="t" style="left:557px;top:112.5px;font-size:11.5px;transform:scaleY(1.1);transform-origin:0 0">13:14</div>

<div class="t" style="left:14.5px;top:118.5px;font-size:11px;transform:scale(0.975,1.12);transform-origin:0 0">Current Location</div>
<div class="box" style="left:12px;top:136px;width:183px;height:68px"></div>
<div class="t" style="left:14.5px;top:139px;font-size:11px;transform:scale(0.975,1.12);transform-origin:0 0">Test Location</div>
<div class="t" style="left:13px;top:214px;font-size:11px;transform:scale(0.975,1.12);transform-origin:0 0">Reason for Detainment</div>
<div class="box" style="left:12px;top:235px;width:183px;height:64px"></div>
<div class="t" style="left:14.5px;top:238px;font-size:11px;transform:scale(0.975,1.12);transform-origin:0 0">Test Detainment</div>

<div class="t lnk" style="left:202.5px;top:137px;font-size:11.5px;letter-spacing:0.2px">Case Number:</div>
<div class="t" style="left:204px;top:158px;font-size:11px;transform:scaleY(1.12);transform-origin:0 0">Notes/Instructions:</div>
<div class="box" style="left:203px;top:175px;width:553px;height:124px"></div>
<div class="t" style="left:204.5px;top:178.5px;font-size:11px;transform:scale(0.975,1.12);transform-origin:0 0">Notes/Instructions on this Detainee</div>
<div class="t lnk" style="left:439px;top:137px;font-size:11.5px;letter-spacing:0.1px">Originating Agency:</div>


<!-- originating dropdown -->
<div class="a" style="left:558px;top:137px;width:198px;height:19px;background:#fff;border:1px solid #0078d7"></div>
<div class="a" style="left:739px;top:139px;width:16px;height:15px;background:#f0f0f0"></div>
<svg class="a" style="left:743px;top:145px" width="7" height="4" shape-rendering="crispEdges"><path d="M0 0h7v1h-1v1h-1v1h-1v1h-1v-1h-1v-1h-1v-1h-1z"/></svg>
<div class="t" style="left:561.5px;top:140px;font-size:11px;transform:scaleY(1.12);transform-origin:0 0">TEST ORIGINATING</div>
<div class="a" style="left:558px;top:156px;width:198px;height:47px;background:#fff;border:1px solid #000"></div>
<div class="a" style="left:559px;top:187px;width:196px;height:15px;background:#0078d7;border:1px dotted #ff8a28"></div>
<div class="t" style="left:561.5px;top:158.7px;font-size:11px;transform:scaleY(1.12);transform-origin:0 0">TEST ORIGIN 2</div>
<div class="t" style="left:561.5px;top:173.7px;font-size:11px;transform:scaleY(1.12);transform-origin:0 0">TEST ORIGIN 3</div>
<div class="t" style="left:561.5px;top:188.7px;font-size:11px;color:#fff;transform:scaleY(1.12);transform-origin:0 0">TEST ORIGINATING</div>

<!-- callout -->
<div class="a" style="left:546px;top:135px;width:213px;height:73px;box-shadow:inset 4px 4px 6px rgba(0,0,0,.18)"></div>
<div class="a" style="left:544px;top:133px;width:217px;height:77px;border:2px solid #f44c4c;box-shadow:2px 3px 5px rgba(0,0,0,.16)"></div>
<svg class="a" style="left:490px;top:180px" width="140" height="130">
<defs><filter id="sh" x="-30%" y="-30%" width="160%" height="160%"><feGaussianBlur in="SourceAlpha" stdDeviation="2.2"/><feOffset dx="2" dy="3" result="b"/><feComponentTransfer><feFuncA type="linear" slope="0.45"/></feComponentTransfer><feMerge><feMergeNode/><feMergeNode in="SourceGraphic"/></feMerge></filter></defs>
<g filter="url(#sh)">
<polygon points="116,19 101,49.6 94.5,43 46.3,86.8 39.7,79.2 88,35.5 84,26.6" fill="#ff4848"/>
<circle cx="42.5" cy="83.5" r="20.5" fill="#ff0000"/>
</g>
<text x="42.5" y="94.3" text-anchor="middle" font-family="Liberation Sans" font-size="31" fill="#ececec">A</text>
</svg>


<!-- panel 2 -->
<div class="a" style="left:8px;top:306px;width:762px;height:275px;border-top:1px solid #fff;border-left:1px solid #fff;border-bottom:1px solid #a0a0a0;border-right:1px solid #a0a0a0"></div><div class="a" style="left:769px;top:300px;width:1px;height:10px;background:#a0a0a0"></div>
<div class="t lnk" style="left:21px;top:316px;font-size:11.5px">Timestamp:</div>
<div class="box" style="left:88px;top:313px;width:120px;height:19px"></div>
<div class="a" style="left:191px;top:315px;width:15px;height:15px;background:#f0f0f0"></div>
<svg class="a" style="left:195px;top:321px" width="7" height="4" shape-rendering="crispEdges"><path d="M0 0h7v1h-1v1h-1v1h-1v1h-1v-1h-1v-1h-1v-1h-1z"/></svg>
<div class="t" style="left:97px;top:317px;font-size:11.5px">/</div><div class="t" style="left:108.5px;top:317px;font-size:11.5px">/</div><div class="t" style="left:133px;top:317.5px;font-size:11px;transform:scaleY(1.12);transform-origin:0 0">:</div>
<div class="t lnk" style="left:220.5px;top:316px;font-size:11.5px;letter-spacing:0.45px">Event:</div>
<div class="sunk" style="left:270px;top:312px;width:180px;height:20px"><i></i></div>
<div class="btn3d" style="left:432px;top:314px;width:17px;height:17px"></div>
<svg class="a" style="left:437px;top:321px" width="7" height="4" shape-rendering="crispEdges"><path d="M0 0h7v1h-1v1h-1v1h-1v1h-1v-1h-1v-1h-1v-1h-1z"/></svg>
<div class="t" style="left:471px;top:316px;font-size:11px;transform:scaleY(1.12);transform-origin:0 0">Notes</div>
<div class="sunk" style="left:510px;top:312px;width:222px;height:20px"><i></i></div>
<svg class="a" style="left:736px;top:314px" width="18" height="18">
<path d="M4 9H14M9 4V14" stroke="#0a6a0a" stroke-width="4.2" stroke-linecap="round"/>
<path d="M4 8.8H14M8.8 4V14" stroke="#5ee03a" stroke-width="2" stroke-linecap="round"/>
<path d="M4.5 8.3H13M8.3 4.5V13" stroke="#9af07a" stroke-width=".8" stroke-linecap="round"/>
</svg>

<!-- grid -->
<div class="a" style="left:11px;top:354px;width:756px;height:36px;background:#a0a0a0"></div>
<div class="t" style="left:20px;top:367px;font-size:11px;color:#e4e4e4;transform:scale(0.975,1.12);transform-origin:0 0">Drag a column header here to group by that column</div>
<div class="a" style="left:11px;top:390px;width:756px;height:188px;background:#fff"></div>
<div class="a" style="left:767px;top:354px;width:1px;height:225px;background:#a0a0a0"></div>
<div class="a" style="left:11px;top:577px;width:757px;height:2px;background:#a0a0a0"></div>
<div class="a" style="left:11px;top:390px;width:756px;height:19px;background:#f0f0f0;border-top:1px solid #000;border-bottom:1px solid #000;border-left:1px solid #000"></div>
<div class="a" style="left:116px;top:391px;width:1px;height:17px;background:#000"></div>
<div class="a" style="left:182px;top:391px;width:1px;height:17px;background:#000"></div>
<div class="a" style="left:391px;top:391px;width:1px;height:17px;background:#000"></div>
<div class="a" style="left:584px;top:391px;width:1px;height:17px;background:#000"></div>
<div class="t" style="left:15px;top:395px;font-size:11px;transform:scaleY(1.12);transform-origin:0 0">Officer</div>
<div class="t" style="left:119px;top:395px;font-size:11px;transform:scaleY(1.12);transform-origin:0 0">Date</div>
<div class="t" style="left:186px;top:395px;font-size:11px;transform:scaleY(1.12);transform-origin:0 0">Time</div>
<div class="t" style="left:393px;top:395px;font-size:11px;transform:scaleY(1.12);transform-origin:0 0">Event or Action</div>
<div class="t" style="left:586px;top:395px;font-size:11px;transform:scaleY(1.12);transform-origin:0 0">Notes</div>
<div class="a" style="left:117px;top:409px;width:650px;height:17px;background:#f0f0f0"></div>
<div class="a" style="left:11px;top:426px;width:756px;height:1px;background:#a0a0a0"></div>
<div class="t" style="left:14px;top:412px;font-size:11px;transform:scaleY(1.12);transform-origin:0 0">ADMIN, ADMIN</div>
<div class="t" style="left:119px;top:411.5px;font-size:12px">8/16/2017</div>
<div class="t" style="left:185px;top:412px;font-size:11.5px;transform:scaleY(1.07);transform-origin:0 0">13:25:28</div>
<div class="t" style="left:393px;top:412px;font-size:11px;transform:scaleY(1.12);transform-origin:0 0">OTHER</div>
<div class="t" style="left:587px;top:412px;font-size:11px;transform:scale(0.975,1.12);transform-origin:0 0">Added Special Instructions</div>
<div class="a" style="left:11px;top:444px;width:756px;height:1px;background:#a0a0a0"></div>
<div class="t" style="left:14px;top:430px;font-size:11px;transform:scaleY(1.12);transform-origin:0 0">ADMIN, ADMIN</div>
<div class="t" style="left:119px;top:429.5px;font-size:12px">8/16/2017</div>
<div class="t" style="left:185px;top:430px;font-size:11.5px;transform:scaleY(1.07);transform-origin:0 0">13:25:28</div>
<div class="t" style="left:393px;top:430px;font-size:11px;transform:scaleY(1.12);transform-origin:0 0">OTHER</div>
<div class="t" style="left:587px;top:430px;font-size:11px;transform:scale(0.975,1.12);transform-origin:0 0">Added Reason for Detainment</div>
<div class="a" style="left:11px;top:462px;width:756px;height:1px;background:#a0a0a0"></div>
<div class="t" style="left:14px;top:448px;font-size:11px;transform:scaleY(1.12);transform-origin:0 0">ADMIN, ADMIN</div>
<div class="t" style="left:119px;top:447.5px;font-size:12px">8/16/2017</div>
<div class="t" style="left:185px;top:448px;font-size:11.5px;transform:scaleY(1.07);transform-origin:0 0">13:25:27</div>
<div class="t" style="left:393px;top:448px;font-size:11px;transform:scaleY(1.12);transform-origin:0 0">OTHER</div>
<div class="t" style="left:587px;top:448px;font-size:11px;transform:scale(0.975,1.12);transform-origin:0 0">Added Current Location</div>
<div class="a" style="left:11px;top:480px;width:756px;height:1px;background:#a0a0a0"></div>
<div class="t" style="left:14px;top:466px;font-size:11px;transform:scaleY(1.12);transform-origin:0 0">ADMIN, ADMIN</div>
<div class="t" style="left:119px;top:465.5px;font-size:12px">8/16/2017</div>
<div class="t" style="left:185px;top:466px;font-size:11.5px;transform:scaleY(1.07);transform-origin:0 0">13:14:27</div>
<div class="t" style="left:393px;top:466px;font-size:11px;transform:scaleY(1.12);transform-origin:0 0">RELEASED</div>
<div class="t" style="left:587px;top:466px;font-size:11px;transform:scaleY(1.12);transform-origin:0 0">Released</div>
<div class="a" style="left:11px;top:498px;width:756px;height:1px;background:#a0a0a0"></div>
<div class="t" style="left:14px;top:484px;font-size:11px;transform:scaleY(1.12);transform-origin:0 0">ADMIN, ADMIN</div>
<div class="t" style="left:119px;top:483.5px;font-size:12px">8/14/2017</div>
<div class="t" style="left:185px;top:484px;font-size:11.5px;transform:scaleY(1.07);transform-origin:0 0">01:00:00</div>
<div class="t" style="left:393px;top:484px;font-size:11px;transform:scaleY(1.12);transform-origin:0 0">DETAINED</div>
<div class="t" style="left:587px;top:484px;font-size:11px;transform:scaleY(1.12);transform-origin:0 0">Detained</div>
<div class="a" style="left:11px;top:408px;width:1px;height:90px;background:#a0a0a0"></div>
<div class="a" style="left:116px;top:408px;width:1px;height:90px;background:#a0a0a0"></div>
<div class="a" style="left:182px;top:408px;width:1px;height:90px;background:#a0a0a0"></div>
<div class="a" style="left:391px;top:408px;width:1px;height:90px;background:#a0a0a0"></div>
<div class="a" style="left:584px;top:408px;width:1px;height:90px;background:#a0a0a0"></div>
<div class="a" style="left:11px;top:408px;width:1px;height:170px;background:#a0a0a0"></div>

<div class="a" style="left:12px;top:560px;width:755px;height:17px;background-color:#f0f0f0;background-image:conic-gradient(#fff 25%,#f0f0f0 0 50%,#fff 0 75%,#f0f0f0 0);background-size:2px 2px"></div>
<div class="a" style="left:12px;top:560px;width:18px;height:17px;background:#f0f0f0;border:1px solid #000;box-shadow:inset 1px 1px 0 #fff"></div>
<svg class="a" style="left:18px;top:564px" width="5" height="9" shape-rendering="crispEdges"><path d="M4 0h1v9h-1v-1h-1v-1h-1v-1h-1v-1h-1v-1h1v-1h1v-1h1v-1h1z"/></svg>
<div class="a" style="left:29px;top:560px;width:607px;height:17px;background:#f0f0f0;border:1px solid #000;box-shadow:inset 1px 1px 0 #fff"></div>
<div class="a" style="left:749px;top:560px;width:17px;height:17px;background:#f0f0f0;border:1px solid #000;box-shadow:inset 1px 1px 0 #fff"></div>
<svg class="a" style="left:755px;top:564px" width="5" height="9" shape-rendering="crispEdges"><path d="M0 0h1v1h1v1h1v1h1v1h1v1h-1v1h-1v1h-1v1h-1v1h-1z"/></svg>

<div id="content"></div>
</body></html>
